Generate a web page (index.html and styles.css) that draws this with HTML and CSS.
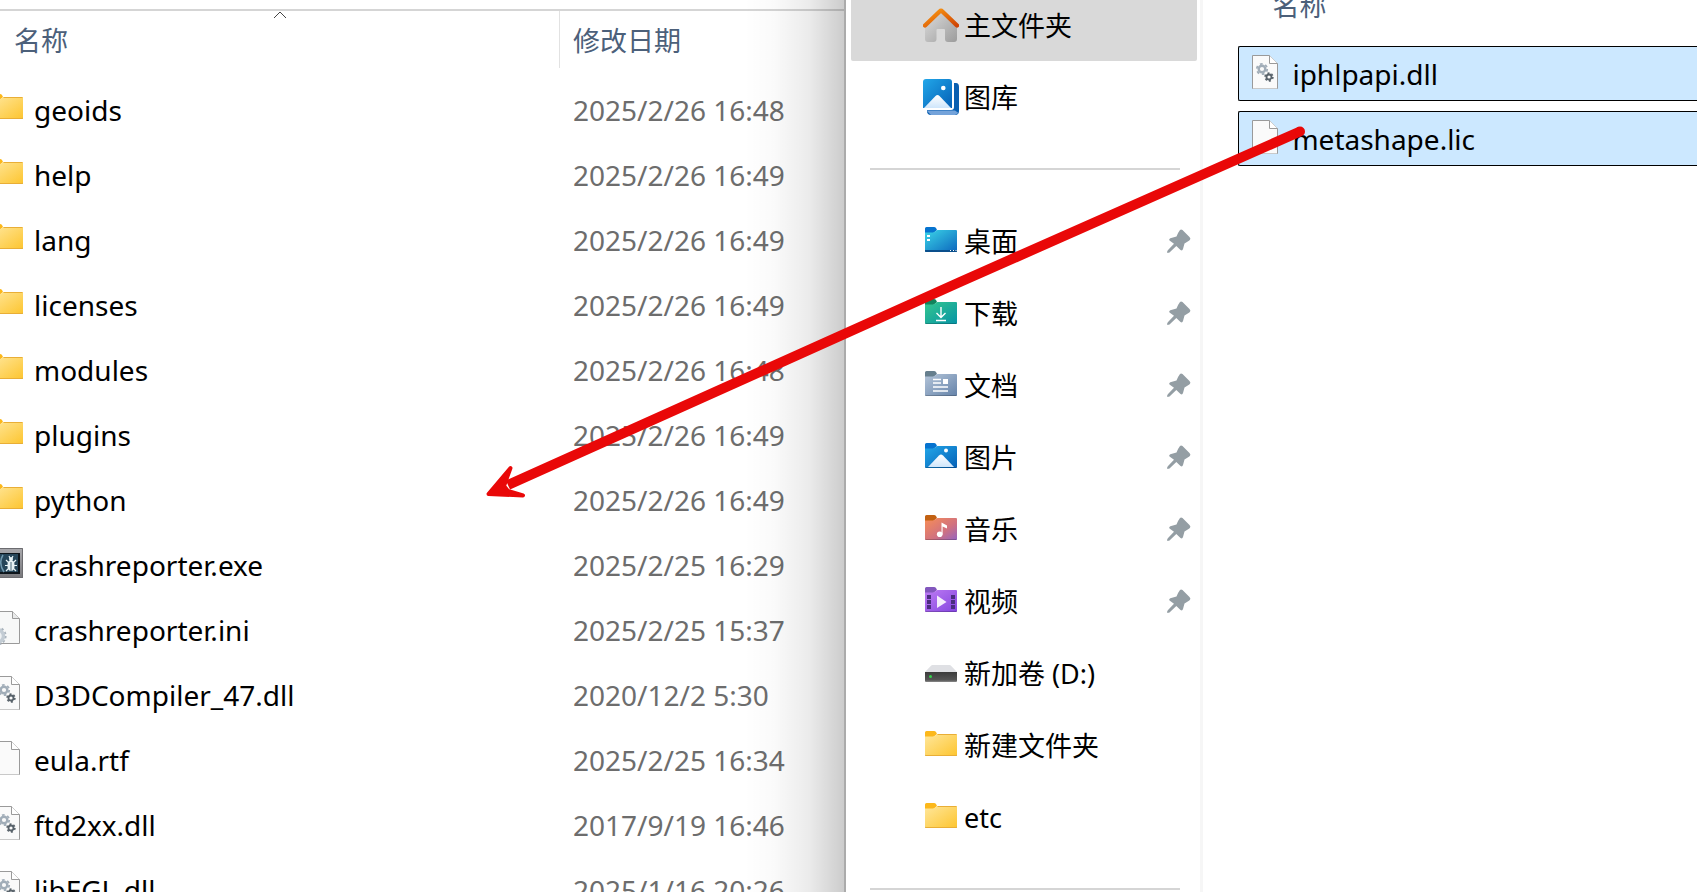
FILE: index.html
```
<!DOCTYPE html>
<html lang="zh-CN">
<head>
    <meta charset="UTF-8">
    <meta name="viewport" content="width=device-width, initial-scale=1.0">
    <title>文件资源管理器</title>
    <link rel="stylesheet" href="styles.css">
</head>
<body>
    <!-- Shared icons -->
    <svg class="sprite" aria-hidden="true">
        <defs>
            <linearGradient id="yellow" x1="0" y1="0" x2="1" y2="1"><stop offset="0" stop-color="#ffe79c"/><stop offset="1" stop-color="#fdc52f"/></linearGradient>
            <linearGradient id="cyan" x1="0" y1="0" x2="1" y2="1"><stop offset="0" stop-color="#3bd5e8"/><stop offset="1" stop-color="#0c66bd"/></linearGradient>
            <linearGradient id="green" x1="0" y1="0" x2="1" y2="1"><stop offset="0" stop-color="#36c78e"/><stop offset="1" stop-color="#0593a5"/></linearGradient>
            <linearGradient id="slate" x1="0" y1="0" x2="1" y2="1"><stop offset="0" stop-color="#b4c5d9"/><stop offset="1" stop-color="#6583a9"/></linearGradient>
            <linearGradient id="blue" x1="0" y1="0" x2="1" y2="1"><stop offset="0" stop-color="#22a7e9"/><stop offset="1" stop-color="#0560b6"/></linearGradient>
            <linearGradient id="coral" x1="0" y1="0" x2="1" y2="1"><stop offset="0" stop-color="#f88e55"/><stop offset=".6" stop-color="#d07180"/><stop offset="1" stop-color="#9564c0"/></linearGradient>
            <linearGradient id="purple" x1="0" y1="0" x2="1" y2="1"><stop offset="0" stop-color="#bd7bf3"/><stop offset="1" stop-color="#8445df"/></linearGradient>
            <linearGradient id="roof" x1="0" y1="0" x2="1" y2="1"><stop offset="0" stop-color="#fb9a12"/><stop offset="1" stop-color="#cf4405"/></linearGradient>
            <linearGradient id="wall" x1="0" y1="0" x2="1" y2="1"><stop offset="0" stop-color="#dedede"/><stop offset="1" stop-color="#9c9c9c"/></linearGradient>
            <linearGradient id="snow" x1="0" y1="0" x2="0" y2="1"><stop offset="0" stop-color="#ffffff"/><stop offset="1" stop-color="#cfe6fb"/></linearGradient>
            <linearGradient id="drive" x1="0" y1="0" x2="0" y2="1"><stop offset="0" stop-color="#3b3b3b"/><stop offset=".8" stop-color="#555555"/><stop offset="1" stop-color="#8a8a8a"/></linearGradient>
            <linearGradient id="frame" x1="0" y1="0" x2="0" y2="1"><stop offset="0" stop-color="#a9a9ad"/><stop offset="1" stop-color="#77777b"/></linearGradient>
        </defs>

        <symbol id="tab" viewBox="0 0 32 36">
            <path d="M0 10V5.500Q0 4 1.500 4H9Q10.300 4 11 5L12 7L9 9.500Q8.500 10 7.500 10Z"/>
        </symbol>
        <symbol id="body" viewBox="0 0 32 36">
            <path d="M0 9.500H8Q9 9.500 9.800 8.800L11 7.700Q11.700 7 12.700 7H31Q32 7 32 8V28Q32 29 31 29H1Q0 29 0 28Z"/>
            <path d="M0 27.500V28Q0 29 1 29H31Q32 29 32 28V27.500Q31.800 28 31 28H1Q.2 28 0 27.500Z" fill="#000" opacity=".2"/>
        </symbol>

        <symbol id="folder" viewBox="0 0 32 36">
            <use href="#tab" fill="#fcb81b"/>
            <use href="#body" fill="url(#yellow)"/>
            <path d="M12.500 7.500H31.500" stroke="#e9ae36" stroke-width="1"/>
            <path d="M.5 28.500H31.500" stroke="#e9ae36" stroke-width="1"/>
        </symbol>

        <symbol id="desktop" viewBox="0 0 32 36">
            <use href="#tab" fill="#0673cf"/>
            <use href="#body" fill="url(#cyan)"/>
            <path d="M2 12h3v2h-3zM2 16h3v2h-3z" fill="#fff"/>
            <path d="M0 27H32V28Q32 29 31 29H1Q0 29 0 28Z" fill="#0a4f8c"/>
            <path d="M25 27.500h1M28 27.500h1M30.500 27.500h1" stroke="#fff" stroke-width="1"/>
        </symbol>

        <symbol id="downloads" viewBox="0 0 32 36">
            <use href="#tab" fill="#11845d"/>
            <use href="#body" fill="url(#green)"/>
            <path d="M16 12V22M11.500 18L16 22.500L20.500 18M11 25.500H21" fill="none" stroke="#fff" stroke-width="1.400"/>
        </symbol>

        <symbol id="documents" viewBox="0 0 32 36">
            <use href="#tab" fill="#667f8e"/>
            <use href="#body" fill="url(#slate)"/>
            <path d="M8 12.500H16M8 16H16M8 20H23M8 24H23" stroke="#fff" stroke-width="1.400"/>
            <rect x="18" y="12" width="5" height="5" fill="#fff"/>
        </symbol>

        <symbol id="pictures" viewBox="0 0 32 36">
            <use href="#tab" fill="#0673cf"/>
            <use href="#body" fill="url(#blue)"/>
            <path d="M3 28L14 16.500Q16 14.500 18 16.500L29 28Z" fill="url(#snow)"/>
            <circle cx="21" cy="11.500" r="2" fill="#fff"/>
        </symbol>

        <symbol id="music" viewBox="0 0 32 36">
            <use href="#tab" fill="#c26112"/>
            <use href="#body" fill="url(#coral)"/>
            <circle cx="14.700" cy="23.300" r="2.800" fill="#fff"/>
            <path d="M16.500 23.500V11.500L22 14.500V17.500L17.600 15.500V23.500Z" fill="#fff"/>
        </symbol>

        <symbol id="videos" viewBox="0 0 32 36">
            <use href="#tab" fill="#8257bd"/>
            <use href="#body" fill="url(#purple)"/>
            <path d="M2 12h4v4h-4zM2 17h4v4h-4zM2 22h4v4h-4zM26 12h4v4h-4zM26 17h4v4h-4zM26 22h4v4h-4z" fill="#4b2d7f"/>
            <path d="M12 12.500L21.500 19L12 25Z" fill="#f4ecfc"/>
        </symbol>

        <symbol id="disk" viewBox="0 0 32 36">
            <path d="M7.500 10H24.500Q25.500 10 26 10.700L32 17H0L6 10.700Q6.500 10 7.500 10Z" fill="#dfe0e4"/>
            <path d="M0 17H32V26Q32 27 31 27H1Q0 27 0 26Z" fill="url(#drive)"/>
            <circle cx="5.500" cy="21.500" r="1.500" fill="#35d24c"/>
        </symbol>

        <symbol id="page" viewBox="0 0 32 36">
            <path d="M3.500 1.500H20.500L28.500 9.500V34.500H3.500Z" fill="#fafafa" stroke="#9a9a9a"/>
            <path d="M20.500 1.500V9.500H28.500" fill="#fff" stroke="#9a9a9a"/>
            <path d="M4 34.500H28" stroke="#c9c9c9"/>
        </symbol>

        <symbol id="dll" viewBox="0 0 32 36">
            <use href="#page"/>
            <circle cx="13" cy="15" r="3.300" fill="none" stroke="#a1adb8" stroke-width="2.400"/>
            <circle cx="13" cy="15" r="5.200" fill="none" stroke="#a1adb8" stroke-width="1.800" stroke-dasharray="2.700 2.745"/>
            <circle cx="20" cy="23" r="2.500" fill="none" stroke="#59636b" stroke-width="1.800"/>
            <circle cx="20" cy="23" r="3.900" fill="none" stroke="#59636b" stroke-width="1.600" stroke-dasharray="2 2.084"/>
        </symbol>

        <symbol id="ini" viewBox="0 0 32 36">
            <path d="M3.500 1.500H21.500L28.500 8.500V33.500H3.500Z" fill="#f7f8f8" stroke="#9a9a9a"/>
            <path d="M21.500 1.500V8.500H28.500" fill="#e9eaea" stroke="#9a9a9a"/>
            <circle cx="6" cy="26" r="6.500" fill="#eef1f3" stroke="#c3ccd4" stroke-width="3.500"/>
            <circle cx="6" cy="26" r="8.800" fill="none" stroke="#aab4bd" stroke-width="1.600" stroke-dasharray="2.400 2.207"/>
        </symbol>

        <symbol id="crash" viewBox="0 0 32 36">
            <rect x="0" y="3" width="32" height="30" fill="url(#frame)"/>
            <path d="M0 3.500H31.500V32.500H0" fill="none" stroke="#6c6c70"/>
            <rect x="3" y="8" width="26" height="21" fill="#0d151b"/>
            <path d="M4 9H27V27H4Z" fill="#26465a"/>
            <path d="M12 10Q7 18 13 27" fill="none" stroke="#6f98ae" stroke-width="1.500"/>
            <ellipse cx="20" cy="20.500" rx="3.600" ry="5.500" fill="#e7f2f5"/>
            <circle cx="20" cy="14" r="2" fill="#e7f2f5"/>
            <path d="M15 15L18 18M25 15L22 18M14 20.500H18M26 20.500H22M15 26L18 23M25 26L22 23M18 11L19 13M22 11L21 13" stroke="#e7f2f5" stroke-width="1.200"/>
            <path d="M20 17V26" stroke="#26465a" stroke-width=".8"/>
        </symbol>

        <symbol id="home" viewBox="0 0 36 36">
            <path d="M2 17L18 3.500L34 17V32Q34 35 31 35H25Q22 35 22 32V23Q22 22 21 22H14.500Q13.500 22 13.500 23V32Q13.500 35 10.500 35H5Q2 35 2 32Z" fill="url(#wall)"/>
            <path d="M2 18.500L16.600 4.500Q18 3.200 19.400 4.500L34 18.500" fill="none" stroke="url(#roof)" stroke-width="4.400" stroke-linecap="round"/>
        </symbol>

        <symbol id="gallery" viewBox="0 0 36 36">
            <path d="M31 4H33Q36 4 36 8V32Q36 36 32 36H8Q4 36 4 32V31H28Q31 31 31 28Z" fill="#0a5fb0"/>
            <path d="M4 32L8 36H32L35.500 34L32 31.500H4Z" fill="#74a3da"/>
            <path d="M3 0H26Q29 0 29 3V29H0V3Q0 0 3 0Z" fill="url(#blue)"/>
            <path d="M1 29L12.500 17Q14.500 15 16.500 17L28 29Z" fill="url(#snow)"/>
            <circle cx="20.300" cy="9" r="2.300" fill="#fff"/>
        </symbol>

        <symbol id="pin" viewBox="0 0 24 24">
            <path d="M13 1Q14 0 15.500 1L22.500 8Q24 9.500 23 10.800Q22 12 17.500 14.500L16 20Q15.300 22.300 13.500 21L9.300 17L2.500 23.500L.5 24L0 23L.8 21.300L7 14.800L2.500 11.500Q1.500 10 3.300 9.200L9.500 7.500Q11 3.500 13 1Z" fill="#949ea4"/>
        </symbol>
    </svg>

    <main class="desktop">
        <!-- Program folder -->
        <section class="window window-back">
            <svg class="sort-caret" viewBox="0 0 14 8" aria-hidden="true"><path d="M1 7L7 1L13 7" fill="none" stroke="#444" stroke-width="1"/></svg>
            <table class="files">
                <thead>
                    <tr><th class="col-name">名称</th><th class="col-date"><span>修改日期</span></th></tr>
                </thead>
                <tbody>
                    <tr><td><div class="file"><svg class="icon"><use href="#folder"/></svg>geoids</div></td><td class="date">2025/2/26 16:48</td></tr>
                    <tr><td><div class="file"><svg class="icon"><use href="#folder"/></svg>help</div></td><td class="date">2025/2/26 16:49</td></tr>
                    <tr><td><div class="file"><svg class="icon"><use href="#folder"/></svg>lang</div></td><td class="date">2025/2/26 16:49</td></tr>
                    <tr><td><div class="file"><svg class="icon"><use href="#folder"/></svg>licenses</div></td><td class="date">2025/2/26 16:49</td></tr>
                    <tr><td><div class="file"><svg class="icon"><use href="#folder"/></svg>modules</div></td><td class="date">2025/2/26 16:48</td></tr>
                    <tr><td><div class="file"><svg class="icon"><use href="#folder"/></svg>plugins</div></td><td class="date">2025/2/26 16:49</td></tr>
                    <tr><td><div class="file"><svg class="icon"><use href="#folder"/></svg>python</div></td><td class="date">2025/2/26 16:49</td></tr>
                    <tr><td><div class="file"><svg class="icon"><use href="#crash"/></svg>crashreporter.exe</div></td><td class="date">2025/2/25 16:29</td></tr>
                    <tr><td><div class="file"><svg class="icon"><use href="#ini"/></svg>crashreporter.ini</div></td><td class="date">2025/2/25 15:37</td></tr>
                    <tr><td><div class="file"><svg class="icon"><use href="#dll"/></svg>D3DCompiler_47.dll</div></td><td class="date">2020/12/2 5:30</td></tr>
                    <tr><td><div class="file"><svg class="icon"><use href="#page"/></svg>eula.rtf</div></td><td class="date">2025/2/25 16:34</td></tr>
                    <tr><td><div class="file"><svg class="icon"><use href="#dll"/></svg>ftd2xx.dll</div></td><td class="date">2017/9/19 16:46</td></tr>
                    <tr><td><div class="file"><svg class="icon"><use href="#dll"/></svg>libEGL.dll</div></td><td class="date">2025/1/16 20:26</td></tr>
                </tbody>
            </table>
        </section>

        <!-- Front window -->
        <section class="window window-front">
            <nav class="sidebar">
                <a class="nav-item active" href="#"><svg class="icon-big"><use href="#home"/></svg><span>主文件夹</span></a>
                <a class="nav-item" href="#"><svg class="icon-big"><use href="#gallery"/></svg><span>图库</span></a>
                <hr>
                <a class="nav-item" href="#"><svg class="icon"><use href="#desktop"/></svg><span>桌面</span><svg class="pin"><use href="#pin"/></svg></a>
                <a class="nav-item" href="#"><svg class="icon"><use href="#downloads"/></svg><span>下载</span><svg class="pin"><use href="#pin"/></svg></a>
                <a class="nav-item" href="#"><svg class="icon"><use href="#documents"/></svg><span>文档</span><svg class="pin"><use href="#pin"/></svg></a>
                <a class="nav-item" href="#"><svg class="icon"><use href="#pictures"/></svg><span>图片</span><svg class="pin"><use href="#pin"/></svg></a>
                <a class="nav-item" href="#"><svg class="icon"><use href="#music"/></svg><span>音乐</span><svg class="pin"><use href="#pin"/></svg></a>
                <a class="nav-item" href="#"><svg class="icon"><use href="#videos"/></svg><span>视频</span><svg class="pin"><use href="#pin"/></svg></a>
                <a class="nav-item" href="#"><svg class="icon"><use href="#disk"/></svg><span>新加卷 (D:)</span></a>
                <a class="nav-item" href="#"><svg class="icon"><use href="#folder"/></svg><span>新建文件夹</span></a>
                <a class="nav-item" href="#"><svg class="icon"><use href="#folder"/></svg><span>etc</span></a>
                <hr>
            </nav>
            <div class="content">
                <table class="picked">
                    <thead>
                        <tr><th>名称</th></tr>
                    </thead>
                    <tbody>
                        <tr><td><div class="file"><svg class="icon"><use href="#dll"/></svg>iphlpapi.dll</div></td></tr>
                        <tr><td><div class="file"><svg class="icon"><use href="#page"/></svg>metashape.lic</div></td></tr>
                    </tbody>
                </table>
            </div>
        </section>
    </main>

    <!-- Red arrow drawn over both windows -->
    <svg class="arrow" viewBox="0 0 1697 892" aria-hidden="true">
        <path d="M1300 131.500L960 282L508 485" fill="none" stroke="#e90808" stroke-width="10"/>
        <circle cx="1300" cy="131.500" r="5" fill="#e90808"/>
        <path d="M488.500 494L510.500 468L504 486L508 491L523 495.500Z" fill="#e90808" stroke="#e90808" stroke-width="4" stroke-linejoin="round"/>
    </svg>
</body>
</html>
```

FILE: styles.css
```
* {
    box-sizing: border-box;
}

body {
    margin: 0;
    height: 100vh;
    overflow: hidden;
    position: relative;
    background-color: #fff;
    color: #000;
    font-family: "Noto Sans", "Noto Sans CJK SC", sans-serif;
    font-size: 28px;
    line-height: 36px;
}

.sprite {
    position: absolute;
    width: 0;
    height: 0;
}

.desktop {
    display: grid;
    grid-template-columns: 844fr 853fr;
    height: 100%;
}

.window {
    min-width: 0;
    overflow: hidden;
    background-color: #fff;
}

table {
    width: 100%;
    border-collapse: separate;
    border-spacing: 0;
    table-layout: fixed;
}

th,
td {
    padding: 0;
    text-align: left;
    font-weight: normal;
    white-space: nowrap;
}

th {
    color: #4c607a;
    font-size: 27px;
}

.file {
    display: flex;
    align-items: center;
    gap: 11px;
}

.icon {
    flex: none;
    width: 32px;
    height: 36px;
}

.file .icon {
    margin-bottom: 4px;
}

/* Back window */
.window-back {
    position: relative;
    padding-top: 9px;
}

/* shadow cast by the front window */
.window-back::after {
    content: "";
    position: absolute;
    top: 0;
    right: 0;
    bottom: 0;
    width: 100px;
    background: linear-gradient(to right, rgba(0, 0, 0, 0), rgba(0, 0, 0, 0.02) 30%, rgba(0, 0, 0, 0.08) 65%, rgba(0, 0, 0, 0.2));
}

.files {
    border-top: 2px solid #d5d5d5;
}

.files th {
    height: 66px;
    vertical-align: top;
}

.files td {
    height: 65px;
}

.files .col-name {
    padding: 12px 0 0 14px;
}

.files .col-date {
    width: 285px;
}

.col-date span {
    display: block;
    padding: 12px 0 9px 13px;
    border-left: 1px solid #e2e2e2;
}

.files .file {
    margin-left: -9px;
}

.files .date {
    padding-left: 14px;
    color: #6d6d6d;
}

.sort-caret {
    position: absolute;
    top: 11px;
    left: 273px;
    width: 14px;
    height: 8px;
}

/* Front window */
.window-front {
    display: flex;
    border-left: 2px solid #ababab;
}

.sidebar {
    flex: none;
    width: 42%;
    margin-top: -11px;
    padding: 0 3px 0 5px;
    border-right: 3px solid #f6f6f6;
    font-size: 27px;
}

.nav-item {
    display: flex;
    align-items: center;
    gap: 7px;
    height: 72px;
    padding: 0 6px 0 74px;
    border-radius: 2px;
    color: #000;
    text-decoration: none;
    white-space: nowrap;
}

.nav-item span {
    padding-top: 2px;
}

.nav-item.active {
    background-color: #d9d9d9;
}

.icon-big {
    flex: none;
    width: 36px;
    height: 36px;
    margin: 0 -2px;
}

.pin {
    flex: none;
    width: 24px;
    height: 24px;
    margin-left: auto;
}

.sidebar hr {
    height: 2px;
    margin: 35px 17px 35px 19px;
    border: 0;
    background-color: #d5d5d5;
}

.content {
    flex: 1;
    min-width: 0;
    padding-left: 35px;
}

.picked {
    margin-top: -34px;
    border-spacing: 0 10px;
}

.picked th {
    height: 60px;
    padding-left: 34px;
}

.picked td {
    height: 55px;
    padding-left: 10px;
    background-color: #cce8ff;
    border: 1px solid #000;
    border-right: 0;
    border-radius: 2px 0 0 2px;
}

/* Annotation */
.arrow {
    position: absolute;
    top: 0;
    left: 0;
    width: 100%;
    height: auto;
    pointer-events: none;
}
```
